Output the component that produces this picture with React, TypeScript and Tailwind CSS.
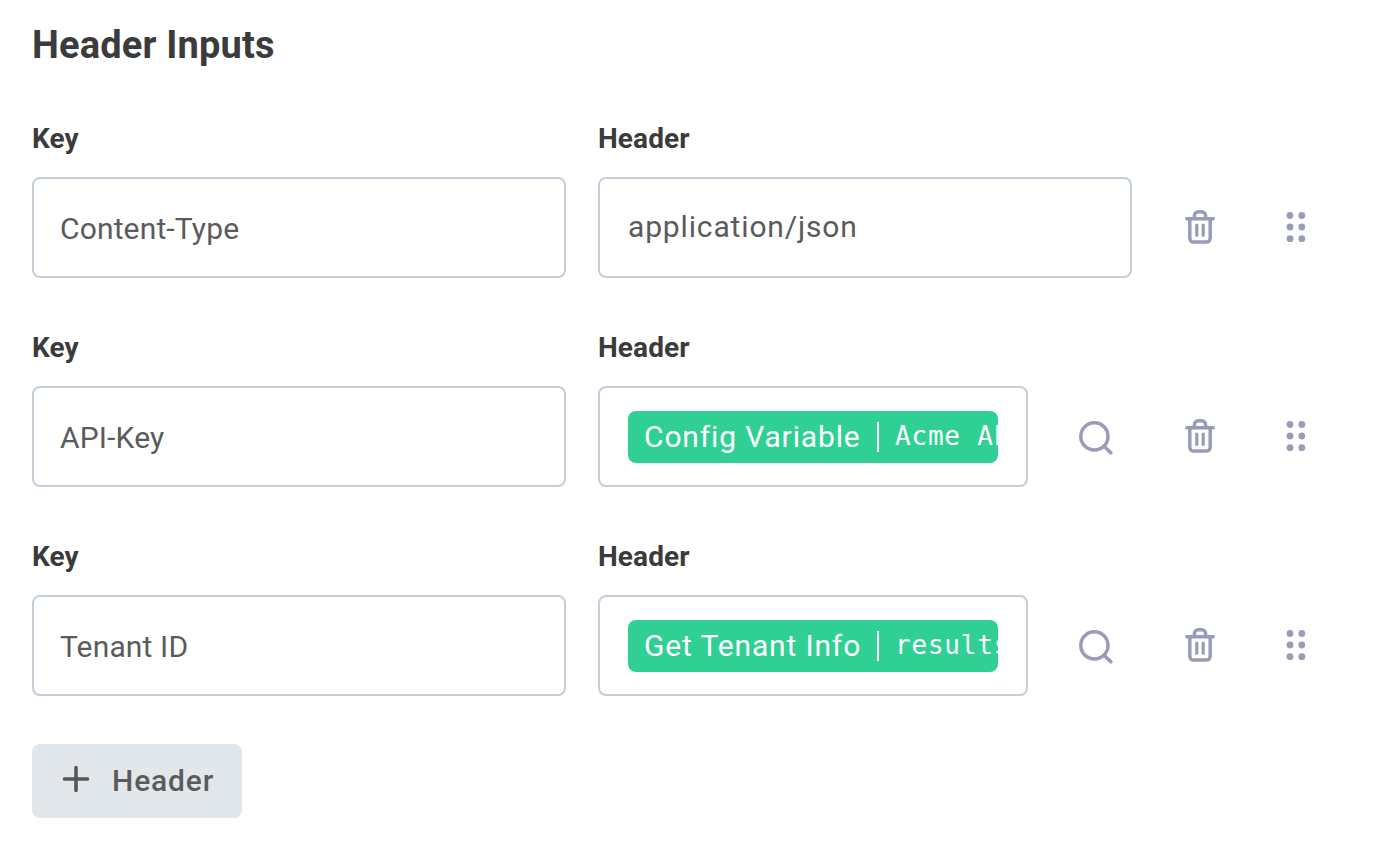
import React from "react";

function Trash() {
  return (
    <svg viewBox="0 0 32 36" className="h-9 w-8" fill="none" stroke="#999cb8" strokeWidth="3.5" strokeLinecap="round" strokeLinejoin="round">
      <path d="M2.8 9.8h26.4" />
      <path d="M10.4 9V6.8a4 4 0 0 1 4-4h3.2a4 4 0 0 1 4 4V9" />
      <path d="M5.8 10v19.3a3.7 3.7 0 0 0 3.7 3.7h13a3.7 3.7 0 0 0 3.7-3.7V10" />
      <path d="M12.8 16v10.3M19.2 16v10.3" strokeWidth="3.2" />
    </svg>
  );
}

function Search() {
  return (
    <svg viewBox="0 0 36 38" className="h-[38px] w-9" fill="none" stroke="#999cb8" strokeWidth="3.5" strokeLinecap="round">
      <circle cx="17.4" cy="18.4" r="13.6" />
      <path d="M27.4 28.4l6.4 6.4" />
    </svg>
  );
}

function Grip() {
  return (
    <svg viewBox="0 0 20 36" className="h-9 w-5" fill="#999cb8">
      {[6.5, 18, 29.7].map((y) => (
        <g key={y}>
          <circle cx="4" cy={y} r="3.4" />
          <circle cx="15.8" cy={y} r="3.4" />
        </g>
      ))}
    </svg>
  );
}

type Row = { name: string; value?: string; source?: string; path?: string };

const rows: Row[] = [
  { name: "Content-Type", value: "application/json" },
  { name: "API-Key", source: "Config Variable", path: "Acme API Key" },
  { name: "Tenant ID", source: "Get Tenant Info", path: "results" },
];

const label = "h-[58px] pt-0.5 text-[28px] leading-[36px] font-bold tracking-[0.1px] text-[#3b3b3b]";
const box = "flex h-[101px] items-center rounded-[8px] border-2 border-[#c3ced9]";

function InputRow({ row }: { row: Row }) {
  return (
    <div className="flex h-[209px]">
      <div className="w-[534px]">
        <div className={label}>Key</div>
        <div className={`${box} pt-px pl-[26px] text-[30px] tracking-[0.15px]`}>{row.name}</div>
      </div>
      <div className={row.source ? "ml-8 w-[430px]" : "ml-8 w-[534px]"}>
        <div className={label}>Header</div>
        <div className={`${box} px-7 text-[30px] tracking-[0.85px]`}>
          {row.source ? (
            <div className="flex h-[52px] w-[370px] items-center overflow-hidden rounded-[8px] bg-[#30cf94] pl-4 whitespace-nowrap text-white">
              <span className="w-[217px] shrink-0">{row.source}</span>
              <span className="mx-4 h-[30px] w-0.5 shrink-0 bg-white" />
              <span className="font-['DejaVu_Sans_Mono',monospace] text-[26px] tracking-[0.8px]">{row.path}</span>
            </div>
          ) : (
            <span className="pb-0.5">{row.value}</span>
          )}
        </div>
      </div>
      <div className="flex items-start pt-[90px]">
        {row.source && (
          <div className="ml-[49px]">
            <Search />
          </div>
        )}
        <div className={row.source ? "ml-[71px]" : "ml-[52px]"}>
          <Trash />
        </div>
        <div className="ml-[70px]">
          <Grip />
        </div>
      </div>
    </div>
  );
}

export default function App() {
  return (
    <main className="h-[858px] w-[1400px] overflow-hidden bg-white px-8 pt-[21px] font-[Roboto,sans-serif] text-[#5b5b5b]">
      <h1 className="h-[98px] text-[38px] leading-[48px] font-bold tracking-[0.17px] text-[#3b3b3b]">Header Inputs</h1>
      {rows.map((row) => (
        <InputRow key={row.name} row={row} />
      ))}
      <button className="-mt-0.5 flex h-[74px] w-[210px] items-center rounded-[8px] bg-[#e2e7eb] pb-0.5 pl-[30px] text-[30px] font-medium tracking-[0.85px]">
        <svg viewBox="0 0 28 28" className="mr-[22px] mb-0.5 size-7" stroke="#555" strokeWidth="3.6" strokeLinecap="round">
          <path d="M2.500 14h23M14 2.500v23" />
        </svg>
        Header
      </button>
    </main>
  );
}
